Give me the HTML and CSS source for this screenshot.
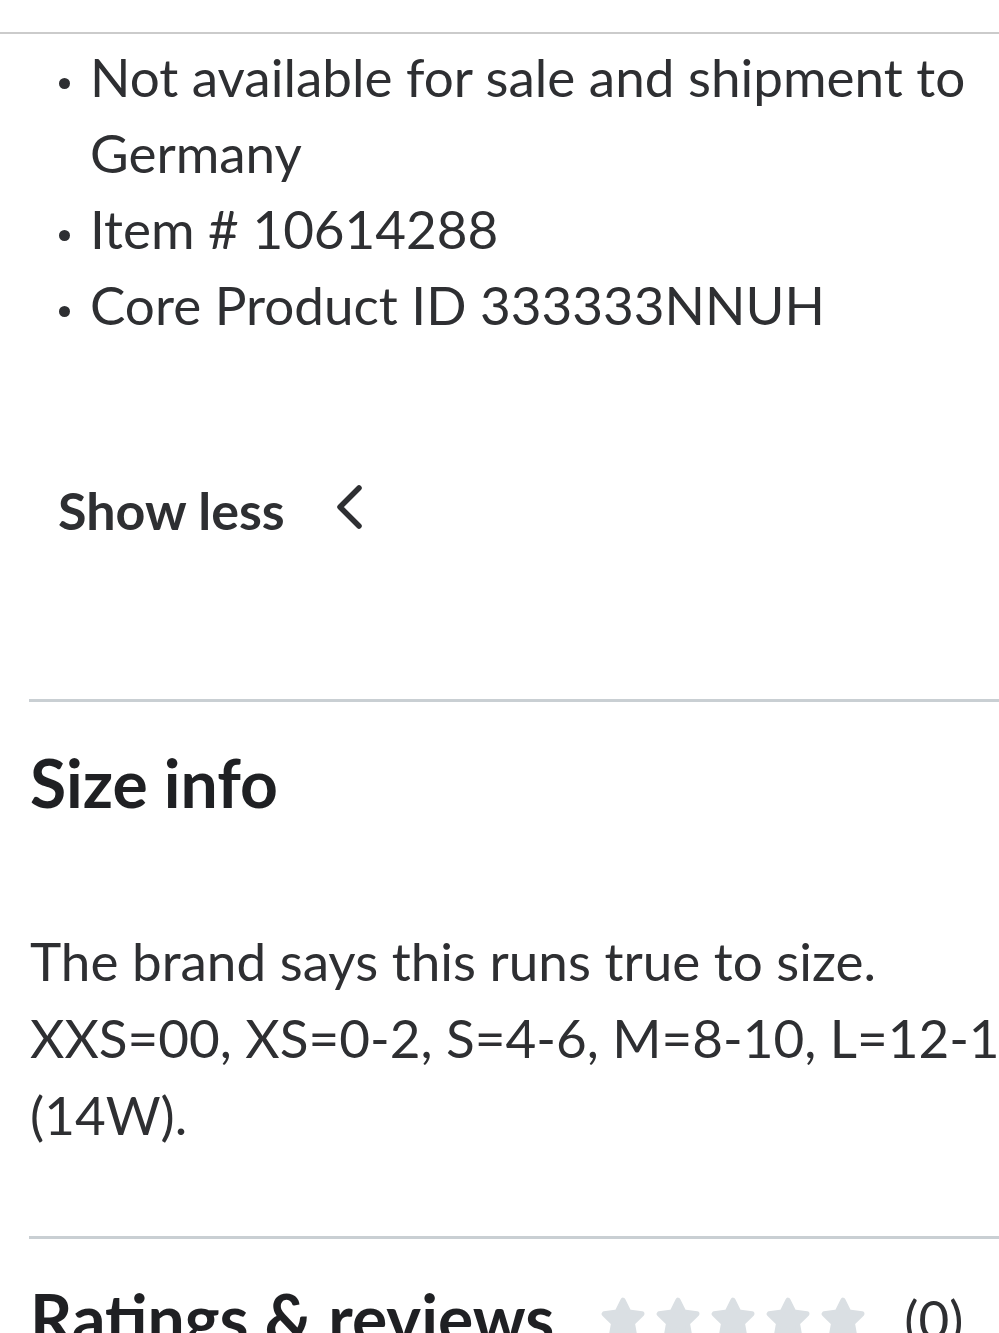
FILE: index.html
```html
<!DOCTYPE html>
<html lang="en">
<head>
<meta charset="utf-8">
<title>Product details</title>
<link rel="stylesheet" href="styles.css">
</head>
<body>
<div class="page">
  <div class="top-rule"></div>

  <section class="desc">
    <ul class="bullets">
      <li>Not available for sale and shipment to Germany</li>
      <li>Item # 10614288</li>
      <li>Core Product ID 333333NNUH</li>
    </ul>
    <button class="toggle" type="button">
      <span>Show less</span>
      <svg class="chev" width="28" height="44" viewBox="0 0 28 44" aria-hidden="true">
        <polyline points="24,3 5,22 24,41" fill="none" stroke="#2e2f32" stroke-width="5.5" stroke-linecap="round" stroke-linejoin="round"/>
      </svg>
    </button>
  </section>

  <section class="section size">
    <h2 class="heading">Size info</h2>
    <p class="size-text">The brand says this runs true to size.<br>XXS=00, XS=0-2, S=4-6, M=8-10, L=12-14, XL=16-18, XXL=20<br>(14W).</p>
  </section>

  <section class="section ratings">
    <div class="ratings-head">
      <h2 class="heading">Ratings &amp; reviews</h2>
      <div class="stars" aria-label="0 out of 5 stars">
        <svg class="star" viewBox="0 0 48 46"><path d="M24 6 L29.6 17.3 L42.1 19.1 L33 27.9 L35.2 40.4 L24 34.5 L12.8 40.4 L15 27.9 L5.9 19.1 L18.4 17.3 Z"/></svg>
        <svg class="star" viewBox="0 0 48 46"><path d="M24 6 L29.6 17.3 L42.1 19.1 L33 27.9 L35.2 40.4 L24 34.5 L12.8 40.4 L15 27.9 L5.9 19.1 L18.4 17.3 Z"/></svg>
        <svg class="star" viewBox="0 0 48 46"><path d="M24 6 L29.6 17.3 L42.1 19.1 L33 27.9 L35.2 40.4 L24 34.5 L12.8 40.4 L15 27.9 L5.9 19.1 L18.4 17.3 Z"/></svg>
        <svg class="star" viewBox="0 0 48 46"><path d="M24 6 L29.6 17.3 L42.1 19.1 L33 27.9 L35.2 40.4 L24 34.5 L12.8 40.4 L15 27.9 L5.9 19.1 L18.4 17.3 Z"/></svg>
        <svg class="star" viewBox="0 0 48 46"><path d="M24 6 L29.6 17.3 L42.1 19.1 L33 27.9 L35.2 40.4 L24 34.5 L12.8 40.4 L15 27.9 L5.9 19.1 L18.4 17.3 Z"/></svg>
      </div>
      <span class="count">(0)</span>
    </div>
  </section>
</div>
</body>
</html>
```

FILE: styles.css
```css
html, body {
  margin: 0;
  padding: 0;
  background: #ffffff;
  overflow: hidden;
}

body {
  font-family: Lato, "Noto Sans", "Liberation Sans", sans-serif;
  color: #2e2f32;
}

.page {
  width: 1120px;
  padding-top: 32px;
}

.top-rule {
  height: 2px;
  background: #cbcbcb;
}

.desc {
  padding: 5px 0 0 58px;
}

.bullets {
  list-style: none;
  margin: 0;
  padding: 0;
  font-size: 53px;
  line-height: 76px;
}

.bullets li {
  padding-left: 32px;
}

.bullets li::before {
  content: "";
  display: inline-block;
  width: 11px;
  height: 11px;
  border-radius: 50%;
  background: #2e2f32;
  margin: 0 20px 8px -31px;
}

.toggle {
  display: flex;
  align-items: center;
  gap: 50px;
  margin-top: 129px;
  padding: 0;
  border: 0;
  background: none;
  font: inherit;
  font-weight: 700;
  font-size: 52px;
  line-height: 76px;
  color: #2e2f32;
  cursor: pointer;
}

.chev {
  display: block;
  margin-top: -6px;
}

.section {
  margin-left: 29px;
  border-top: 3px solid #c9cfd3;
  padding: 41px 0 0 1px;
}

.size {
  margin-top: 151px;
  padding-bottom: 83px;
}

.heading {
  margin: 0;
  font-size: 66px;
  line-height: 80px;
  font-weight: 700;
  color: #1f2023;
}

.size-text {
  margin: 99px 0 0;
  font-size: 53px;
  line-height: 77px;
  white-space: nowrap;
}

.ratings {
  padding-top: 39px;
}

.ratings-head {
  display: flex;
  align-items: center;
}

.stars {
  display: flex;
  gap: 5px;
  margin-left: 44px;
}

.star {
  width: 50px;
  height: 48px;
  display: block;
}

.star path {
  fill: #dadfe3;
  stroke: #dadfe3;
  stroke-width: 5;
  stroke-linejoin: round;
}

.count {
  margin-left: 36px;
  font-size: 53px;
  font-weight: 400;
}
```
